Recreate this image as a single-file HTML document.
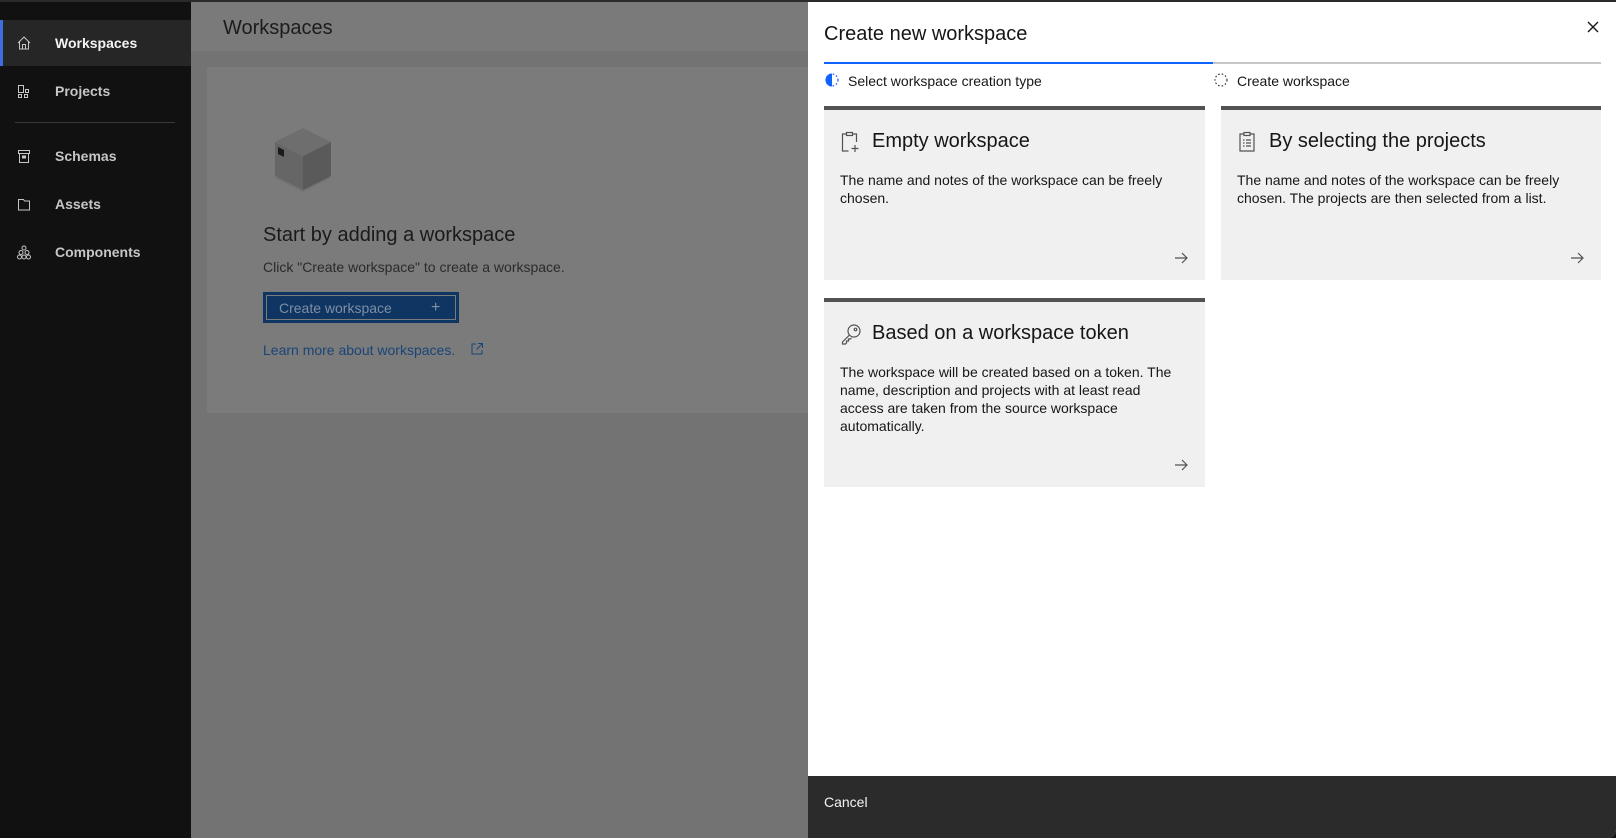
<!DOCTYPE html>
<html><head><meta charset="utf-8"><style>
*{margin:0;padding:0;box-sizing:border-box}
body{width:1616px;height:838px;overflow:hidden;background:#121212;font-family:"Liberation Sans",sans-serif;position:relative}
.abs{position:absolute}
.side{left:0;top:2px;width:191px;height:836px;background:#111}
.nav{position:absolute;left:0;width:191px;height:46px;color:#c6c6c6;font-size:14px;font-weight:bold}
.nav span{position:absolute;left:55px;top:50%;transform:translateY(-50%)}
.nav svg{position:absolute;left:16px;top:50%;transform:translateY(-50%)}
.main{left:191px;top:2px;width:617px;height:836px;background:#737373}
.panel{left:808px;top:2px;width:808px;height:836px;background:#fff;border-bottom-right-radius:8px;overflow:hidden}
.card{position:absolute;background:#f0f0f0;border-top:4px solid #525252}
.ct{position:absolute;left:48px;top:20px;font-size:20px;color:#161616}
.ci{position:absolute;left:16px;top:21px}
.cd{position:absolute;left:16px;top:61px;font-size:14px;line-height:18px;color:#161616;width:340px}
.ar{position:absolute;right:16px;bottom:14px}
</style></head><body>
<div class="abs" style="left:0;top:0;width:1616px;height:2px;background:#2a2a2a"></div>
<div class="abs side">
 <div class="nav" style="top:18px;background:#262626;color:#f4f4f4;border-left:3px solid #3d6ee0"><svg width="16" height="16" viewBox="0 0 16 16" fill="none" stroke="#c6c6c6" style="left:13px"><path d="M2 8L8 2l6 6M3.5 6.5V14h9V6.5M6.5 14V9.5h3V14"/></svg><span style="left:52px">Workspaces</span></div>
 <div class="nav" style="top:66px"><svg width="16" height="16" viewBox="0 0 16 16" fill="none" stroke="#c6c6c6"><rect x="2.5" y="2.5" width="5" height="7"/><rect x="9.5" y="6.5" width="3" height="3"/><rect x="2.5" y="11.5" width="3" height="3"/><rect x="8.5" y="11.5" width="3" height="3"/></svg><span>Projects</span></div>
 <div class="abs" style="left:15px;top:120px;width:160px;height:1px;background:#393939"></div>
 <div class="nav" style="top:131px"><svg width="16" height="16" viewBox="0 0 16 16" fill="none" stroke="#c6c6c6"><rect x="2.5" y="2.5" width="11" height="3"/><path d="M3.5 5.5v9h9v-9"/><rect x="6.5" y="8" width="3" height="2" fill="#c6c6c6"/></svg><span>Schemas</span></div>
 <div class="nav" style="top:179px"><svg width="16" height="16" viewBox="0 0 16 16" fill="none" stroke="#c6c6c6"><path d="M2.5 3.5h5l1 1.5h5v9h-11z"/></svg><span>Assets</span></div>
 <div class="nav" style="top:227px"><svg width="16" height="16" viewBox="0 0 16 16" fill="none" stroke="#c6c6c6"><circle cx="8" cy="4" r="2"/><circle cx="5" cy="8.5" r="2"/><circle cx="11" cy="8.5" r="2"/><circle cx="3.5" cy="13" r="2"/><circle cx="8" cy="13" r="2"/><circle cx="12.5" cy="13" r="2"/></svg><span>Components</span></div>
</div>
<div class="abs main">
 <div class="abs" style="left:0;top:0;width:617px;height:49px;background:#7a7a7a"></div>
 <div class="abs" style="left:32px;top:15px;font-size:20px;color:#1c1c1c">Workspaces</div>
 <div class="abs" style="left:16px;top:65px;width:601px;height:346px;background:#7b7b7b"></div>
 <svg class="abs" style="left:82px;top:122px" width="60" height="80" viewBox="0 0 60 80"><path d="M30 68 L58 54 L30 40 L2 54Z" fill="#727272" opacity=".9"/><path d="M2 18 L30 32 L30 66 L2 52Z" fill="#666"/><path d="M58 18 L30 32 L30 66 L58 52Z" fill="#5a5a5a"/><path d="M2 18 L30 4 L58 18 L30 32Z" fill="#6e6e6e"/><path d="M5 23 L11 26 L11 33 L5 30Z" fill="#1a1a1a"/></svg>
 <div class="abs" style="left:72px;top:222px;font-size:20px;color:#1a1a1a">Start by adding a workspace</div>
 <div class="abs" style="left:72px;top:257px;font-size:14px;color:#2a2a2a">Click "Create workspace" to create a workspace.</div>
 <div class="abs" style="left:72px;top:290px;width:196px;height:31px;background:#0f3563;border:2px solid #0f3563;outline:1px solid #7b7b7b;outline-offset:-4px"></div>
 <div class="abs" style="left:88px;top:298px;font-size:14px;color:#7f8ea3">Create workspace</div>
 <div class="abs" style="left:240px;top:297px;font-size:16px;color:#7f8ea3">+</div>
 <div class="abs" style="left:72px;top:340px;font-size:14px;color:#1a4478">Learn more about workspaces.</div>
 <svg class="abs" style="left:278px;top:339px" width="16" height="16" viewBox="0 0 16 16" fill="none" stroke="#1a4478"><path d="M7 3H3v10h10V9M9 2.5h4.5V7M13.5 2.5L7.5 8.5"/></svg>
</div>
<div class="abs panel">
 <div class="abs" style="left:16px;top:21px;font-size:20px;color:#161616">Create new workspace</div>
 <svg class="abs" style="left:777px;top:17px" width="16" height="16" viewBox="0 0 16 16" stroke="#161616" stroke-width="1.4"><path d="M3 3l10 10M13 3L3 13"/></svg>
 <div class="abs" style="left:16px;top:60px;width:389px;height:2px;background:#0f62fe"></div>
 <div class="abs" style="left:405px;top:60px;width:388px;height:2px;background:#c6c6c6"></div>
 <svg class="abs" style="left:16px;top:70px" width="16" height="16" viewBox="0 0 16 16"><path d="M8 1.5a6.5 6.5 0 0 0 0 13z" fill="#0f62fe"/><circle cx="8" cy="8" r="6" fill="none" stroke="#0f62fe" stroke-width="1.2" stroke-dasharray="1.6 2"/></svg>
 <div class="abs" style="left:40px;top:71px;font-size:14px;color:#161616">Select workspace creation type</div>
 <svg class="abs" style="left:405px;top:70px" width="16" height="16" viewBox="0 0 16 16"><circle cx="8" cy="8" r="6" fill="none" stroke="#161616" stroke-width="1" stroke-dasharray="1.6 2"/></svg>
 <div class="abs" style="left:429px;top:71px;font-size:14px;color:#161616">Create workspace</div>
 <div class="card" style="left:16px;top:104px;width:381px;height:174px">
  <svg class="ci" width="20" height="22" viewBox="0 0 20 22" fill="none" stroke="#525252" stroke-width="1.2"><rect x="6.5" y="1.5" width="6" height="3"/><path d="M6.5 3H2.5v17h6M12.5 3h4v8M15 14v7M11.5 17.5h7"/></svg>
  <div class="ct">Empty workspace</div>
  <div class="cd">The name and notes of the workspace can be freely chosen.</div>
  <svg class="ar" width="16" height="16" viewBox="0 0 16 16" fill="none" stroke="#525252" stroke-width="1.2"><path d="M2 8h12M9 3l5 5-5 5"/></svg>
 </div>
 <div class="card" style="left:413px;top:104px;width:380px;height:174px">
  <svg class="ci" width="20" height="22" viewBox="0 0 20 22" fill="none" stroke="#525252" stroke-width="1.2"><rect x="7" y="1.5" width="6" height="3"/><path d="M7 3H3v17h14V3h-4"/><path d="M6 9h1.5M9 9h5M6 12h1.5M9 12h5M6 15h1.5M9 15h5"/></svg>
  <div class="ct">By selecting the projects</div>
  <div class="cd" style="width:350px">The name and notes of the workspace can be freely chosen. The projects are then selected from a list.</div>
  <svg class="ar" width="16" height="16" viewBox="0 0 16 16" fill="none" stroke="#525252" stroke-width="1.2"><path d="M2 8h12M9 3l5 5-5 5"/></svg>
 </div>
 <div class="card" style="left:16px;top:296px;width:381px;height:189px">
  <svg class="ci" width="22" height="22" viewBox="0 0 22 22" fill="none" stroke="#525252" stroke-width="1.2"><circle cx="14" cy="8" r="6"/><circle cx="15.5" cy="6.5" r="1.3"/><path d="M9.5 12L2.5 19v2h3l1-1v-2h2v-2h2l1-1"/></svg>
  <div class="ct">Based on a workspace token</div>
  <div class="cd" style="width:360px;white-space:nowrap">The workspace will be created based on a token. The<br>name, description and projects with at least read<br>access are taken from the source workspace<br>automatically.</div>
  <svg class="ar" width="16" height="16" viewBox="0 0 16 16" fill="none" stroke="#525252" stroke-width="1.2"><path d="M2 8h12M9 3l5 5-5 5"/></svg>
 </div>
 <div class="abs" style="left:0;top:774px;width:808px;height:62px;background:#2b2b2b"></div>
 <div class="abs" style="left:16px;top:792px;font-size:14px;color:#f4f4f4">Cancel</div>
</div>
</body></html>
